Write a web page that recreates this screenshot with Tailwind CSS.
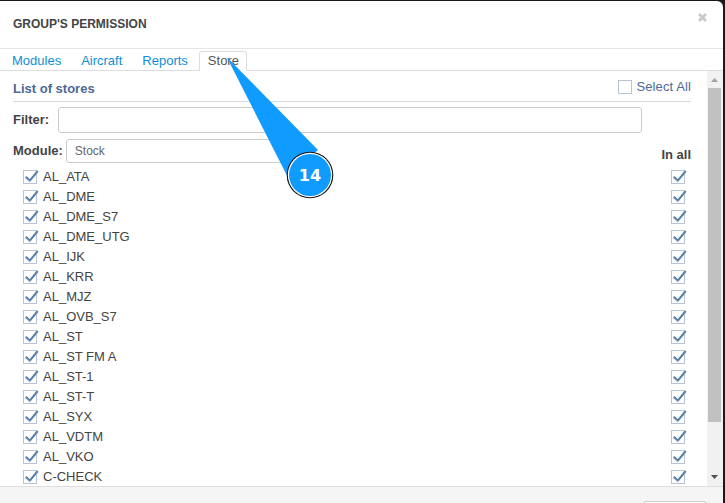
<!DOCTYPE html>
<html>
<head>
<meta charset="utf-8">
<script src="https://cdn.jsdelivr.net/npm/@tailwindcss/browser@4"></script>
</head>
<body class="m-0 h-[503px] w-[725px] overflow-hidden bg-[#1a1a1a] font-['Liberation_Sans',Arial,sans-serif] text-[13px] text-[#444]">
<svg width="0" height="0" class="absolute"><defs><g id="chk"><rect x=".5" y=".5" width="13" height="13" fill="#fff" stroke="#b8c4d2"/><path d="M2.5 8l3.8 3.6L14.5 2" fill="none" stroke="#d3deea" stroke-width="1.6"/><path d="M2.7 6.7L7 10.4 14.7 1" fill="none" stroke="#5a7fa8" stroke-width="2"/></g></defs></svg>
<div class="relative mt-px flex h-[502px] w-[723px] flex-col overflow-hidden rounded-tr-[6px] bg-white">
  <header class="flex h-[48px] shrink-0 items-start justify-between border-b border-[#e5e5e5] pl-[13px] pr-[16px]">
    <h1 class="pt-[16px] text-[12px] leading-[14px] font-bold text-[#444]">GROUP'S PERMISSION</h1>
    <svg class="mt-[12px]" width="9" height="9" viewBox="0 0 9 9" aria-label="Close"><path d="M1 1l7 7M8 1L1 8" fill="none" stroke="#c9c9c9" stroke-width="2.8"/></svg>
  </header>
  <nav class="flex h-[22px] shrink-0 items-end gap-[1px] border-b border-[#ddd] pl-[1px] text-[#0f8fd6]">
    <a class="-mb-px block h-[20px] pl-[11px] pr-[10px] leading-[19px]">Modules</a>
    <a class="-mb-px block h-[20px] px-[9px] leading-[19px]">Aircraft</a>
    <a class="-mb-px block h-[20px] px-[10px] leading-[19px]">Reports</a>
    <a class="-mb-px block h-[20px] rounded-t-[3px] border border-b-0 border-[#ddd] bg-white pl-[8px] pr-[7px] leading-[18px] text-[#555]">Store</a>
  </nav>
  <div class="flex min-h-0 flex-1">
    <main class="min-w-0 flex-1 pl-[13px] pr-[16px]">
      <div class="flex h-[31px] items-center justify-between border-b border-[#d5dbe5] pt-[6px]">
        <h2 class="font-bold text-[#4c6a94]">List of stores</h2>
        <label class="-mt-[4px] flex items-center gap-[5px] tracking-[0.1px] text-[#4c6a94]">
          <span class="block h-[14px] w-[14px] border border-[#b8c4d2] bg-white"></span>Select All
        </label>
      </div>
      <div class="mt-[5px] flex items-center gap-[9px] pr-[49px]">
        <span class="font-bold">Filter:</span>
        <div class="h-[26px] flex-1 rounded-[3px] border border-[#ccc] bg-white"></div>
      </div>
      <div class="mt-[4px] flex items-center justify-between">
        <div class="flex items-center gap-[3px]">
          <span class="font-bold">Module:</span>
          <div class="flex h-[24px] w-[226px] items-center rounded-[3px] border border-[#ccc] bg-white pl-[8px] text-[12px] text-[#666]">Stock</div>
        </div>
        <span class="pt-[8px] font-bold">In all</span>
      </div>
      <div class="mt-[2px] flex flex-col pl-[10px] pr-[6px]">
        <div class="flex h-[20px] items-center justify-between"><label class="flex items-center gap-[6px]"><svg class="overflow-visible" width="14" height="14" viewBox="0 0 14 14"><use href="#chk"/></svg><span>AL_ATA</span></label><svg class="overflow-visible" width="14" height="14" viewBox="0 0 14 14"><use href="#chk"/></svg></div>
        <div class="flex h-[20px] items-center justify-between"><label class="flex items-center gap-[6px]"><svg class="overflow-visible" width="14" height="14" viewBox="0 0 14 14"><use href="#chk"/></svg><span>AL_DME</span></label><svg class="overflow-visible" width="14" height="14" viewBox="0 0 14 14"><use href="#chk"/></svg></div>
        <div class="flex h-[20px] items-center justify-between"><label class="flex items-center gap-[6px]"><svg class="overflow-visible" width="14" height="14" viewBox="0 0 14 14"><use href="#chk"/></svg><span>AL_DME_S7</span></label><svg class="overflow-visible" width="14" height="14" viewBox="0 0 14 14"><use href="#chk"/></svg></div>
        <div class="flex h-[20px] items-center justify-between"><label class="flex items-center gap-[6px]"><svg class="overflow-visible" width="14" height="14" viewBox="0 0 14 14"><use href="#chk"/></svg><span>AL_DME_UTG</span></label><svg class="overflow-visible" width="14" height="14" viewBox="0 0 14 14"><use href="#chk"/></svg></div>
        <div class="flex h-[20px] items-center justify-between"><label class="flex items-center gap-[6px]"><svg class="overflow-visible" width="14" height="14" viewBox="0 0 14 14"><use href="#chk"/></svg><span>AL_IJK</span></label><svg class="overflow-visible" width="14" height="14" viewBox="0 0 14 14"><use href="#chk"/></svg></div>
        <div class="flex h-[20px] items-center justify-between"><label class="flex items-center gap-[6px]"><svg class="overflow-visible" width="14" height="14" viewBox="0 0 14 14"><use href="#chk"/></svg><span>AL_KRR</span></label><svg class="overflow-visible" width="14" height="14" viewBox="0 0 14 14"><use href="#chk"/></svg></div>
        <div class="flex h-[20px] items-center justify-between"><label class="flex items-center gap-[6px]"><svg class="overflow-visible" width="14" height="14" viewBox="0 0 14 14"><use href="#chk"/></svg><span>AL_MJZ</span></label><svg class="overflow-visible" width="14" height="14" viewBox="0 0 14 14"><use href="#chk"/></svg></div>
        <div class="flex h-[20px] items-center justify-between"><label class="flex items-center gap-[6px]"><svg class="overflow-visible" width="14" height="14" viewBox="0 0 14 14"><use href="#chk"/></svg><span>AL_OVB_S7</span></label><svg class="overflow-visible" width="14" height="14" viewBox="0 0 14 14"><use href="#chk"/></svg></div>
        <div class="flex h-[20px] items-center justify-between"><label class="flex items-center gap-[6px]"><svg class="overflow-visible" width="14" height="14" viewBox="0 0 14 14"><use href="#chk"/></svg><span>AL_ST</span></label><svg class="overflow-visible" width="14" height="14" viewBox="0 0 14 14"><use href="#chk"/></svg></div>
        <div class="flex h-[20px] items-center justify-between"><label class="flex items-center gap-[6px]"><svg class="overflow-visible" width="14" height="14" viewBox="0 0 14 14"><use href="#chk"/></svg><span>AL_ST FM A</span></label><svg class="overflow-visible" width="14" height="14" viewBox="0 0 14 14"><use href="#chk"/></svg></div>
        <div class="flex h-[20px] items-center justify-between"><label class="flex items-center gap-[6px]"><svg class="overflow-visible" width="14" height="14" viewBox="0 0 14 14"><use href="#chk"/></svg><span>AL_ST-1</span></label><svg class="overflow-visible" width="14" height="14" viewBox="0 0 14 14"><use href="#chk"/></svg></div>
        <div class="flex h-[20px] items-center justify-between"><label class="flex items-center gap-[6px]"><svg class="overflow-visible" width="14" height="14" viewBox="0 0 14 14"><use href="#chk"/></svg><span>AL_ST-T</span></label><svg class="overflow-visible" width="14" height="14" viewBox="0 0 14 14"><use href="#chk"/></svg></div>
        <div class="flex h-[20px] items-center justify-between"><label class="flex items-center gap-[6px]"><svg class="overflow-visible" width="14" height="14" viewBox="0 0 14 14"><use href="#chk"/></svg><span>AL_SYX</span></label><svg class="overflow-visible" width="14" height="14" viewBox="0 0 14 14"><use href="#chk"/></svg></div>
        <div class="flex h-[20px] items-center justify-between"><label class="flex items-center gap-[6px]"><svg class="overflow-visible" width="14" height="14" viewBox="0 0 14 14"><use href="#chk"/></svg><span>AL_VDTM</span></label><svg class="overflow-visible" width="14" height="14" viewBox="0 0 14 14"><use href="#chk"/></svg></div>
        <div class="flex h-[20px] items-center justify-between"><label class="flex items-center gap-[6px]"><svg class="overflow-visible" width="14" height="14" viewBox="0 0 14 14"><use href="#chk"/></svg><span>AL_VKO</span></label><svg class="overflow-visible" width="14" height="14" viewBox="0 0 14 14"><use href="#chk"/></svg></div>
        <div class="flex h-[20px] items-center justify-between"><label class="flex items-center gap-[6px]"><svg class="overflow-visible" width="14" height="14" viewBox="0 0 14 14"><use href="#chk"/></svg><span>C-CHECK</span></label><svg class="overflow-visible" width="14" height="14" viewBox="0 0 14 14"><use href="#chk"/></svg></div>
      </div>
    </main>
    <aside class="flex h-full w-[16px] shrink-0 flex-col items-start bg-[#f1f1f1] pl-[1px]">
      <svg class="ml-[3px] mt-[7px] shrink-0" width="7" height="4" viewBox="0 0 7 4"><path d="M3.5 0l3.5 4H0z" fill="#a3a3a3"/></svg>
      <div class="mt-[6px] h-[334px] w-[13px] shrink-0 bg-[#c1c1c1]"></div>
      <svg class="ml-[3px] mt-[53px] shrink-0" width="7" height="4" viewBox="0 0 7 4"><path d="M0 0h7L3.5 4z" fill="#505050"/></svg>
    </aside>
  </div>
  <footer class="relative h-[17px] shrink-0 overflow-hidden border-t border-[#ddd] bg-[#f5f5f5]">
    <div class="absolute top-[14px] right-[16px] h-[20px] w-[64px] rounded-[3px] border border-[#ccc] bg-white"></div>
  </footer>
  <svg class="absolute top-[-1px] left-0" width="725" height="503" viewBox="0 0 725 503">
    <path d="M226.7 57L318 150L286.7 175z" fill="#0f9bff"/>
    <circle cx="310" cy="175" r="23.3" fill="#111"/>
    <circle cx="310" cy="175" r="22.2" fill="#fff"/>
    <circle cx="310" cy="175" r="21" fill="#0f9bff"/>
    <text x="310" y="181" text-anchor="middle" font-family="DejaVu Sans" font-weight="700" font-size="16" fill="#fff">14</text>
  </svg>
</div>
</body>
</html>
